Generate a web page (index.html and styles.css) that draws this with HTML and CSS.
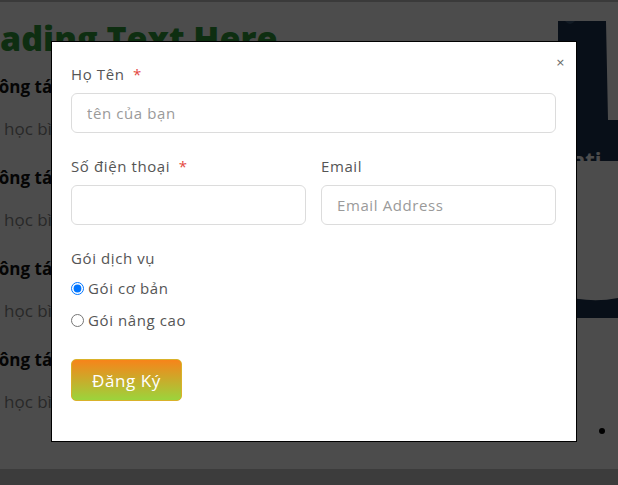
FILE: index.html
```html
<!DOCTYPE html>
<html lang="vi">
<head>
<meta charset="utf-8">
<title>Đăng ký</title>
<link rel="stylesheet" href="styles.css">
</head>
<body>
<div class="topbar"></div>
<main class="page">
  <section class="content">
    <h1 class="heading">Heading Text Here</h1>
    <div class="item">
      <h3 class="item-title">Công tác tuyển sinh</h3>
      <p class="item-desc">học bình thường mỗi ngày</p>
    </div>
    <div class="item">
      <h3 class="item-title">Công tác đào tạo</h3>
      <p class="item-desc">học bình thường mỗi ngày</p>
    </div>
    <div class="item">
      <h3 class="item-title">Công tác hỗ trợ</h3>
      <p class="item-desc">học bình thường mỗi ngày</p>
    </div>
    <div class="item">
      <h3 class="item-title">Công tác tư vấn</h3>
      <p class="item-desc">học bình thường mỗi ngày</p>
    </div>
  </section>
  <aside class="media">
    <svg class="media-art" width="60" height="420" viewBox="0 0 60 420">
      <polygon points="0,0 48,0 50,99 60,99 60,140 0,140" fill="#1c3350"/>
      <path d="M7 0 Q12 6 17 0 Z" fill="#3a5878"/>
      <text x="14" y="147" class="media-text">ati</text>
      <path d="M0 273 Q30 283 60 277 L60 297 L0 297 Z" fill="#1c3350"/>
      <circle cx="44" cy="410" r="3" fill="#000"/>
    </svg>
  </aside>
</main>
<footer class="footer"></footer>

<div class="overlay">
  <form class="modal">
    <button type="button" class="close" aria-label="Đóng">×</button>
    <div class="field">
      <label class="label">Họ Tên <span class="req">*</span></label>
      <input class="input" type="text" placeholder="tên của bạn">
    </div>
    <div class="row">
      <div class="field">
        <label class="label">Số điện thoại <span class="req">*</span></label>
        <input class="input" type="tel">
      </div>
      <div class="field">
        <label class="label">Email</label>
        <input class="input" type="email" placeholder="Email Address">
      </div>
    </div>
    <div class="field radios">
      <label class="label">Gói dịch vụ</label>
      <label class="radio"><input type="radio" name="goi" checked> Gói cơ bản</label>
      <label class="radio"><input type="radio" name="goi"> Gói nâng cao</label>
    </div>
    <button type="button" class="submit">Đăng Ký</button>
  </form>
</div>
</body>
</html>
```
FILE: styles.css
```css
* { box-sizing: border-box; }
html, body { margin: 0; padding: 0; }
body {
  height: 100vh;
  display: grid;
  grid-template-rows: 2px 1fr 16px;
  background: #fff;
  font-family: "Open Sans", "Noto Sans", sans-serif;
  overflow: hidden;
}
.topbar { background: #c4c4c4; }
.footer { background: #c8c8c8; }
.page {
  display: flex;
  justify-content: space-between;
  overflow: hidden;
}
.content {
  flex: 1 1 auto;
  min-width: 0;
  margin-left: -47px;
  padding-top: 14px;
}
.heading {
  margin: 0 0 15px;
  font-size: 34px;
  line-height: 44px;
  font-weight: 800;
  color: #2f9a3a;
  white-space: nowrap;
}
.item { margin-bottom: 25px; }
.item-title {
  margin: 0 0 18px;
  padding-left: 35px;
  font-size: 17px;
  line-height: 24px;
  font-weight: 700;
  color: #111;
  white-space: nowrap;
}
.item-desc {
  margin: 0;
  padding-left: 51px;
  font-size: 17px;
  line-height: 24px;
  color: #888;
  white-space: nowrap;
}
.media {
  flex: 0 0 60px;
  width: 60px;
  padding-top: 19px;
}
.media-art { display: block; overflow: visible; }
.media-text {
  font-family: "Open Sans", sans-serif;
  font-weight: 700;
  font-size: 22px;
  fill: #fff;
}

.overlay {
  position: fixed;
  inset: 0;
  background: rgba(0, 0, 0, 0.7);
  display: flex;
  align-items: flex-start;
  padding: 41px 0 0 51px;
}
.modal {
  position: relative;
  width: 526px;
  height: 401px;
  background: #fff;
  border: 1px solid #000;
  padding: 21px 20px 0 19px;
  color: #555;
  letter-spacing: 0.6px;
}
.close {
  position: absolute;
  top: 15px;
  right: 11px;
  border: 0;
  background: none;
  padding: 0;
  font-size: 11px;
  line-height: 12px;
  color: #666;
  font-family: "DejaVu Sans", sans-serif;
  cursor: pointer;
}
.field {
  display: flex;
  flex-direction: column;
  margin-bottom: 22px;
}
.label {
  font-size: 15px;
  line-height: 22px;
  margin-bottom: 8px;
  color: #555;
}
.req { color: #e4473f; margin-left: 4px; }
.input {
  height: 40px;
  border: 1px solid #dcdcdc;
  border-radius: 6px;
  padding: 0 15px;
  font-family: inherit;
  font-size: 15px;
  letter-spacing: 0.6px;
  color: #555;
  outline: none;
}
.input::placeholder { color: #9a9a9a; }
.row {
  display: grid;
  grid-template-columns: 1fr 1fr;
  gap: 15px;
}
.radios { margin-bottom: 23px; }
.radios .label { margin-bottom: 3px; }
.radio {
  display: flex;
  align-items: center;
  height: 32px;
  font-size: 15px;
  color: #555;
}
.radio input {
  margin: 0 4px 0 0;
  width: 13px;
  height: 13px;
}
.submit {
  width: 111px;
  height: 42px;
  border: 1px solid #d9b22a;
  border-radius: 5px;
  background: linear-gradient(#f7841a, #9bd43c);
  color: #fff;
  font-family: inherit;
  font-size: 17px;
  letter-spacing: 0.6px;
  cursor: pointer;
}
```
